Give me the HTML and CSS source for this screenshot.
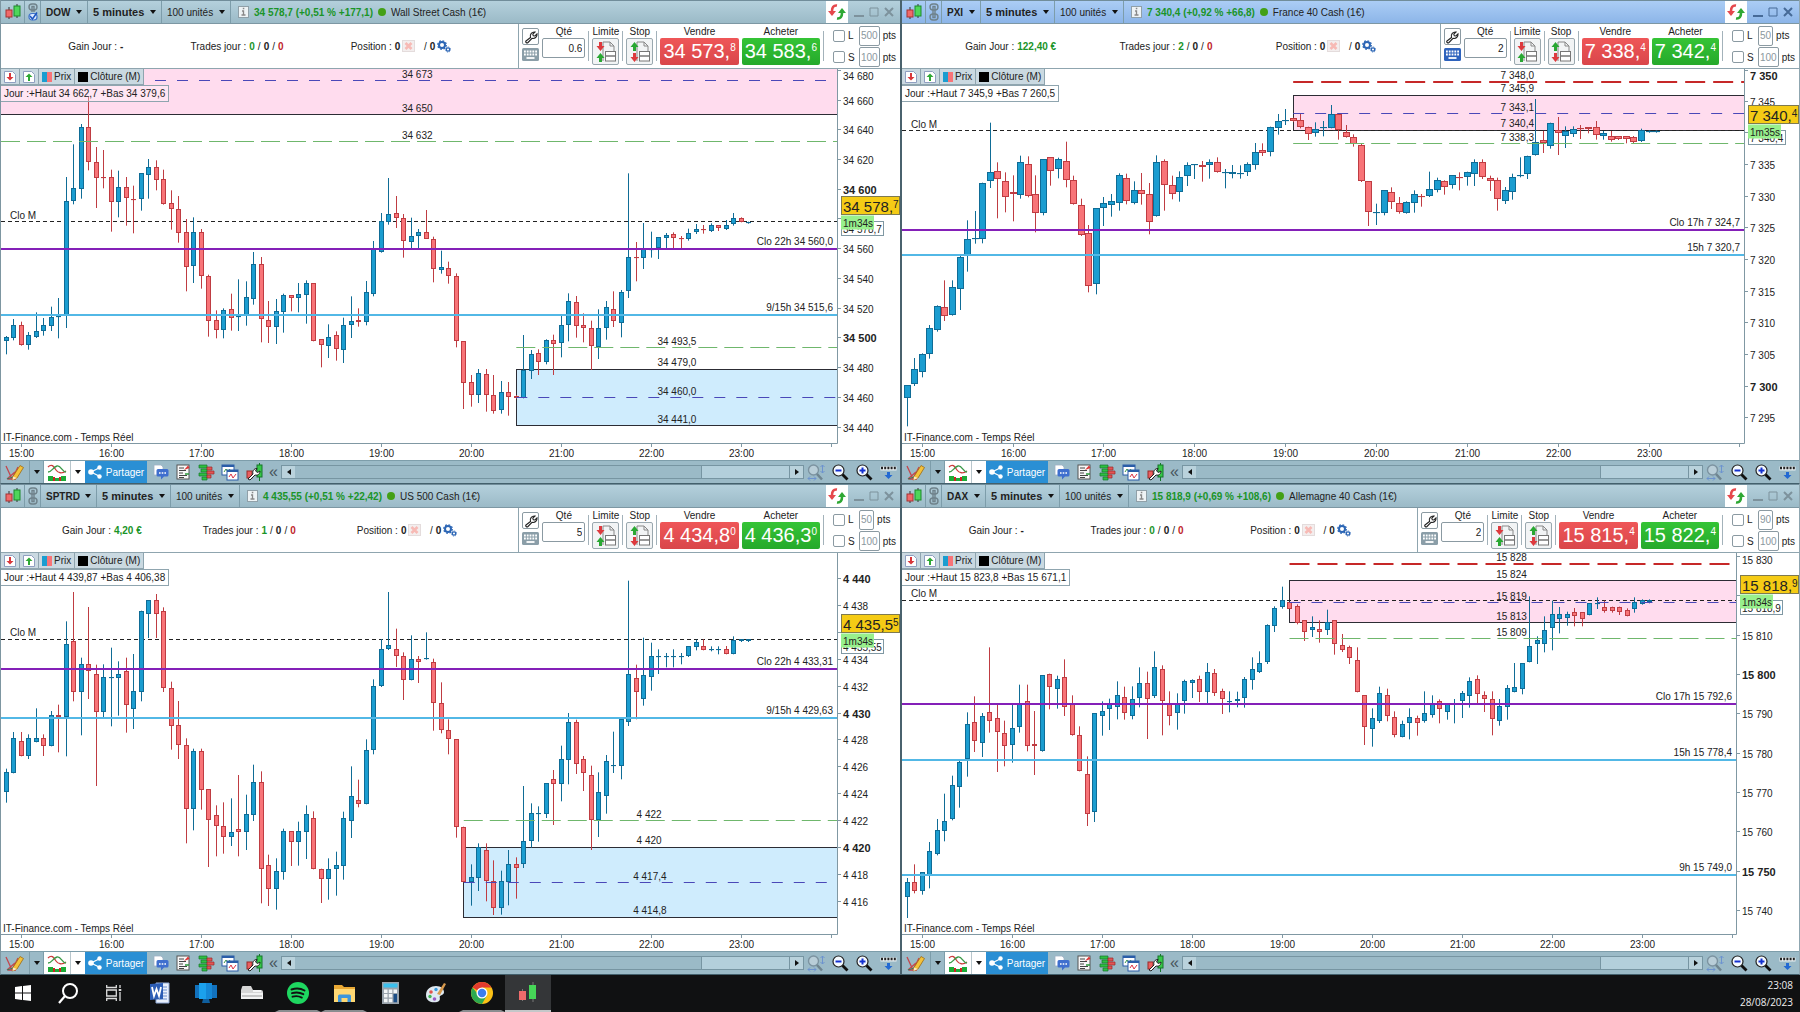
FILE: index.html
```html
<!DOCTYPE html>
<html lang="fr">
<head>
    <meta charset="UTF-8">
    <meta name="viewport" content="width=device-width, initial-scale=1.0">
    <title>Graphiques</title>
    <link rel="stylesheet" href="styles.css">
</head>
<body>
    <svg class="sprite" aria-hidden="true">
        <symbol id="i-candles" viewBox="0 0 16 18">
            <path d="M4 4v12M12 1v14" stroke="#333"/>
            <rect x="1" y="7" width="6" height="7" fill="#f06a6a" stroke="#a83232"/>
            <rect x="9" y="3" width="6" height="10" fill="#4fd65a" stroke="#1d8a2b"/>
        </symbol>
        <symbol id="i-link" viewBox="0 0 10 20">
            <g fill="none" stroke="#6f828b" stroke-width="1.4">
                <rect x="1" y="2" width="8" height="6" rx="3"/><path d="M4 10V4.500h2V10"/>
                <rect x="1" y="12" width="8" height="6" rx="3"/><path d="M4 10v5.500h2V10"/>
            </g>
        </symbol>
        <symbol id="i-linkon" viewBox="0 0 10 20">
            <g fill="none" stroke="#6f828b" stroke-width="1.4">
                <rect x="1" y="2" width="8" height="6" rx="3"/><path d="M4 10V4.500h2V10"/>
            </g>
            <rect x="1" y="11.500" width="8" height="6.500" rx="3" fill="#dce9ff" stroke="#3f73c9" stroke-width="1.200"/>
            <path d="M2 14l2.500 3L9 10.500" fill="none" stroke="#1c55c0" stroke-width="1.500"/>
        </symbol>
        <symbol id="i-info" viewBox="0 0 11 12">
            <rect x=".5" y=".5" width="10" height="11" fill="#eef3f5" stroke="#90a0a8"/>
            <path d="M4 5h1.500v4M3.500 9h4M4.800 2.500h1.500" fill="none" stroke="#888" stroke-width="1.300"/>
        </symbol>
        <symbol id="i-sync" viewBox="0 0 18 16">
            <path d="M9 1.500C5.500 1 4 3.500 4 7" fill="none" stroke="#e5484c" stroke-width="2.600"/>
            <path d="M0 7h8l-4 5z" fill="#e5484c"/>
            <path d="M9 14.500c3.500.5 5-2 5-5.500" fill="none" stroke="#2ea834" stroke-width="2.600"/>
            <path d="M10 9h8l-4-5z" fill="#2ea834"/>
        </symbol>
        <symbol id="i-close" viewBox="0 0 13 12">
            <rect x=".5" y=".5" width="12" height="11" fill="#f3eeee" stroke="#e4dcdc"/>
            <path d="M3.500 3l6 6M9.500 3l-6 6" stroke="#f7bab5" stroke-width="2.600"/>
        </symbol>
        <symbol id="i-gears" viewBox="0 0 14 13">
            <g fill="none" stroke="#2c66b5">
                <circle cx="5" cy="5" r="3" stroke-width="2"/>
                <circle cx="5" cy="5" r="4.300" stroke-width="1.200" stroke-dasharray="1.700 1.670"/>
                <circle cx="11" cy="9.500" r="1.700" stroke-width="1.300"/>
                <circle cx="11" cy="9.500" r="2.600" stroke-width=".8" stroke-dasharray="1 1.040"/>
            </g>
        </symbol>
        <symbol id="i-wrench" viewBox="0 0 14 14">
            <path d="M2 11l4.500-3.500C5.500 4.500 8 1.500 11 2L8.800 4.200l.5 1.500 1.600.3L13 4c.4 3-2.200 5-5 4.300L4 12.500C2.800 13.500 1 12 2 11z" fill="#fff" stroke="#222" stroke-width="1.100"/>
        </symbol>
        <symbol id="i-keyboard" viewBox="0 0 17 13">
            <rect width="17" height="13" rx="1.500" fill="currentColor"/>
            <path d="M2 3.500h13M2 6.500h13" stroke="#fff" stroke-width="2" stroke-dasharray="1.800 1"/>
            <path d="M4.500 10h8" stroke="#fff" stroke-width="1.800"/>
        </symbol>
        <symbol id="i-order" viewBox="0 0 22 22">
            <path d="M8 1h7l4 4v6M15 1v4h4M8 20V1" fill="none" stroke="#888"/>
            <rect x="10.500" y="10.500" width="10" height="9.500" fill="#fff" stroke="#777"/>
            <path d="M10 15h11" stroke="#777" stroke-width="1.500"/>
        </symbol>
        <symbol id="i-limite" viewBox="0 0 22 22">
            <use href="#i-order"/>
            <path d="M4 1h3v4h2.500l-4 5-4-5H4z" fill="#dd3a3e"/>
            <path d="M4 21h3v-4h2.500l-4-5-4 5H4z" fill="#2aa833"/>
        </symbol>
        <symbol id="i-stop" viewBox="0 0 22 22">
            <use href="#i-order"/>
            <path d="M4 10h3V6h2.500l-4-5-4 5H4z" fill="#2aa833"/>
            <path d="M4 12h3v4h2.500l-4 5-4-5H4z" fill="#dd3a3e"/>
        </symbol>
        <symbol id="i-down" viewBox="0 0 12 12">
            <path d="M.5.5h8l3 3v8H.5z" fill="#fff" stroke="#8f9fc0"/>
            <path d="M5 2h2v4h2.500L6 9.500 2.500 6H5z" fill="#d8363a"/>
        </symbol>
        <symbol id="i-up" viewBox="0 0 12 12">
            <path d="M.5.5h8l3 3v8H.5z" fill="#fff" stroke="#8f9fc0"/>
            <path d="M5 10h2V6h2.500L6 2.500 2.500 6H5z" fill="#2ea834"/>
        </symbol>
        <symbol id="i-pencil" viewBox="0 0 20 17">
            <path d="M1 2l6 13L13 3M3 15h8M2 15L10 8" fill="none" stroke="#c4474d" stroke-width="1.300"/>
            <path d="M2 15l9-3" stroke="#3a7a5a"/>
            <path d="M8 12.500L15 1.500l3.500 2L12 14l-4.500 2z" fill="#f4c23a" stroke="#9a6a14" stroke-width=".8"/>
            <path d="M8 12.500L7.500 16l4.500-2z" fill="#fbe9c8"/>
        </symbol>
        <symbol id="i-wave" viewBox="0 0 20 19">
            <path d="M1 4c4-4 6 0 8 3s6 4 10 1" fill="none" stroke="#cc3e3e" stroke-width="1.300"/>
            <path d="M1 9c4 0 5-5 9-6s5 6 9 6" fill="none" stroke="#3a9a48" stroke-width="1.300"/>
            <path d="M1 13h5v5H1zM8 15h4v3H8zM14 13h5v5h-5z" fill="#1dab36"/>
            <path d="M6 14h2v4H6zM12 14h2v4h-2z" fill="#c22"/>
        </symbol>
        <symbol id="i-share" viewBox="0 0 14 14">
            <path d="M12 2.500L3 7l9 4.500" fill="none" stroke="#fff" stroke-width="1.200"/>
            <g fill="#fff"><circle cx="11.500" cy="2.500" r="2.200"/><circle cx="3" cy="7" r="2.800"/><circle cx="11.500" cy="11.500" r="2.200"/></g>
        </symbol>
        <symbol id="i-chat" viewBox="0 0 16 16">
            <path d="M1 1h7l2 2v8H1z" fill="#fff" stroke="#9fb0c4" stroke-width=".8"/>
            <path d="M5 5h9q1.500 0 1.500 1.500v4.500q0 1.500-1.500 1.500h-3L8 15.500v-3H5q-1.500 0-1.500-1.500V6.500Q3.500 5 5 5z" fill="#3f6fce"/>
            <path d="M6 9h7" stroke="#fff" stroke-width="1.600" stroke-dasharray="1.600 1.100"/>
        </symbol>
        <symbol id="i-note" viewBox="0 0 14 16">
            <rect x="1" y="1" width="12" height="14" fill="#f7f7f7" stroke="#555"/>
            <path d="M3 4h5M3 6.500h7M3 9h4M3 11.500h8M3 13.500h5" stroke="#444"/>
            <path d="M8 6l4-4.500L13.500 4z" fill="#d33"/><path d="M9 10h4" stroke="#2a9a3a" stroke-width="1.500"/>
        </symbol>
        <symbol id="i-book" viewBox="0 0 17 17">
            <path d="M1 1h8v3H1zM3 5h6v3H3zM1 9h8v3H1zM4 13h5v3H4z" fill="#2fbf42" stroke="#15762a" stroke-width=".7"/>
            <path d="M9 3h5v3H9zM9 7h7v3H9zM9 11h4v3H9z" fill="#e25555" stroke="#9a2a2a" stroke-width=".7"/>
        </symbol>
        <symbol id="i-windows" viewBox="0 0 18 17">
            <rect x="1" y="1" width="12" height="10" fill="#fff" stroke="#2a5da8"/><path d="M1 2h12" stroke="#2a5da8" stroke-width="2"/>
            <path d="M3 8l2-3 2 3 2-3" fill="none" stroke="#3a9a48"/>
            <rect x="6" y="6" width="11" height="10" fill="#fff" stroke="#2a5da8"/><path d="M6 7h11" stroke="#2a5da8" stroke-width="2"/>
            <path d="M8 13l2-3 2 4 3-4" fill="none" stroke="#d34"/>
        </symbol>
        <symbol id="i-tune" viewBox="0 0 17 18">
            <rect x="1" y="8" width="5" height="7" fill="#ea6060" stroke="#9a2a2a"/>
            <path d="M13.500 0v18" stroke="#15762a"/><rect x="11" y="2" width="5" height="12" fill="#36c848" stroke="#15762a"/>
            <path d="M2 16l5-5C6 8 8 5.500 11 5.500L9.500 8l2 1.500L14 8c0 3.500-2.500 4.500-5 4L4 17z" fill="#fff" stroke="#222"/>
        </symbol>
        <symbol id="i-fit" viewBox="0 0 18 17">
            <circle cx="6.500" cy="6" r="5" fill="#b9ced8" stroke="#7c93a0" stroke-width="1.400"/>
            <path d="M10 10l5 5.500" stroke="#6f8590" stroke-width="2.600"/>
            <path d="M15.500 1v8M13.500 3l2-2 2 2M13.500 7l2 2 2-2M1 14.500h8M3 12.500l-2 2 2 2M7 12.500l2 2-2 2" fill="none" stroke="#6d93cf"/>
        </symbol>
        <symbol id="i-minus" viewBox="0 0 17 17">
            <path d="M10 10l5.500 5.500" stroke="#111" stroke-width="2.800"/>
            <circle cx="6.500" cy="6.500" r="5.500" fill="#f5faff" stroke="#222" stroke-width="1.200"/><path d="M3.500 6.500h6" stroke="#1430d0" stroke-width="2"/>
        </symbol>
        <symbol id="i-plus" viewBox="0 0 17 17">
            <path d="M10 10l5.500 5.500" stroke="#111" stroke-width="2.800"/>
            <circle cx="6.500" cy="6.500" r="5.500" fill="#f5faff" stroke="#222" stroke-width="1.200"/><path d="M3.500 6.500h6M6.500 3.500v6" stroke="#1430d0" stroke-width="2"/>
        </symbol>
        <symbol id="i-dock" viewBox="0 0 17 14">
            <rect x=".5" y="1.500" width="16" height="4" fill="#e9eff2"/>
            <path d="M1 3h15" stroke="#222" stroke-width="2.500" stroke-dasharray="2 1.200"/>
            <path d="M7 7h3v3h2.500l-4 4-4-4H7z" fill="#2369d2"/>
        </symbol>
    </svg>

    <main class="desktop" id="desktop"></main>

    <footer class="taskbar">
        <button class="task" aria-label="Démarrer"><svg viewBox="0 0 16 16" width="16" height="16"><path d="M0 2l7-1v6.500H0zM8 1l8-1v7.500H8zM0 8.500h7V15l-7-1zM8 8.500h8V16l-8-1z" fill="#fff"/></svg></button>
        <button class="task" aria-label="Rechercher"><svg viewBox="0 0 22 22" width="22" height="22"><circle cx="13" cy="9" r="7" fill="none" stroke="#fff" stroke-width="2"/><path d="M8 14l-6 7" stroke="#fff" stroke-width="2.200"/></svg></button>
        <button class="task" aria-label="Vue des tâches"><svg viewBox="0 0 16 16" width="16" height="16"><path d="M.7 0v2.500h9.600V0M.7 16v-2.500h9.600V16M.7 5h9.600v6H.7zM14 0v3M14 7v9" fill="none" stroke="#ddd" stroke-width="1.300"/><path d="M12.700 4h2.600v2h-2.600z" fill="#ddd"/></svg></button>
        <button class="task" aria-label="Word"><svg viewBox="0 0 22 22" width="22" height="22"><path d="M7 1h13v20H7z" fill="#e9f0fb" stroke="#8ea9d6"/><path d="M10 5h8M10 8h8M10 11h8M10 14h8M10 17h8" stroke="#6d8fce"/><path d="M1 2l13-1v16L1 18z" fill="#2c5db5"/><path d="M3 5l2 9 2.500-7 2.500 7 2-9" fill="none" stroke="#fff" stroke-width="1.800"/></svg></button>
        <button class="task" aria-label="Ordinateur"><svg viewBox="0 0 22 20" width="22" height="20"><path d="M0 2h22v13H0z" fill="#1272bd"/><path d="M4 0h13v16H4z" fill="#1ba1ec"/><path d="M11 0h6v16h-6z" fill="#1588d6"/><path d="M8 16h6l1 4H7z" fill="#0f5f9e"/></svg></button>
        <button class="task" aria-label="Scanner"><svg viewBox="0 0 22 16" width="22" height="16"><path d="M1 2q0-1 1-1h8l2 4h8q2 0 2 2v6H0V5z" fill="#d6d6d6"/><path d="M0 8h22v6H0z" fill="#f2f2f2"/><path d="M1 11h20" stroke="#999"/><path d="M12 6h8" stroke="#fff" stroke-width="1.500"/></svg></button>
        <button class="task open" aria-label="Spotify"><svg viewBox="0 0 22 22" width="22" height="22"><circle cx="11" cy="11" r="11" fill="#1ed760"/><path d="M4.500 7.500c4.500-1.500 9.500-1 13 1M5 11.200c4-1.200 8-.8 11.300 1M5.500 14.700c3.500-1 6.500-.6 9.300.9" fill="none" stroke="#111" stroke-width="1.900" stroke-linecap="round"/></svg></button>
        <button class="task open" aria-label="Explorateur"><svg viewBox="0 0 21 18" width="21" height="18"><path d="M0 1h8l2 2h11v15H0z" fill="#e9a935"/><path d="M0 5h21v13H0z" fill="#ffd873"/><path d="M4 18v-6q0-1.500 1.500-1.500h10q1.500 0 1.500 1.500v6h-3.500v-4h-6v4z" fill="#3c96dc"/></svg></button>
        <button class="task" aria-label="Calculatrice"><svg viewBox="0 0 17 22" width="17" height="22"><path d="M0 0h17v22H0z" fill="#9aa4ad"/><path d="M1.500 1.500h14v4h-14z" fill="#3bc0ee"/><path d="M2 7.500h3.500V11H2zM6.800 7.500h3.500V11H6.800zM11.500 7.500H15V11h-3.500zM2 12h3.500v3.500H2zM6.800 12h3.500v3.500H6.800zM2 16.800h3.500v3.500H2zM6.800 16.800h3.500v3.500H6.800z" fill="#f3f6f8"/><path d="M11.500 12H15v8.300h-3.500z" fill="#1c4e86"/></svg></button>
        <button class="task" aria-label="Paint"><svg viewBox="0 0 22 22" width="22" height="22"><path d="M1 13c0-6 5-9 10-9s8 3 8 6-3 3-4 4 1 3-1 5-13 3-13-6z" fill="#dfe9f1"/><path d="M12 12l7-11 2 1-6 11z" fill="#d79a4d"/><circle cx="6" cy="10" r="1.800" fill="#e3524c"/><circle cx="11" cy="7.500" r="1.700" fill="#3c9be0"/><circle cx="5" cy="14.500" r="1.700" fill="#41b556"/><circle cx="9.500" cy="17" r="1.800" fill="#9a5bc4"/></svg></button>
        <button class="task open" aria-label="Chrome"><svg viewBox="0 0 22 22" width="22" height="22"><circle cx="11" cy="11" r="11" fill="#fbc116"/><path d="M11 11L1.500 5.500A11 11 0 0 1 20.500 5.500H11z" fill="#e33b2e"/><path d="M11 11H6L1.500 5.500A11 11 0 0 0 11 22l4.500-8z" fill="#2da94f"/><circle cx="11" cy="11" r="5.500" fill="#fff"/><circle cx="11" cy="11" r="4.200" fill="#3b7ded"/></svg></button>
        <button class="task active" aria-label="Graphiques"><svg viewBox="0 0 20 22" width="20" height="22"><path d="M4.500 7v12M15 0v20" stroke="#777"/><path d="M1 9h7v9H1z" fill="#ee6b6b"/><path d="M11 3h7v14h-7z" fill="#46d657"/></svg></button>
        <div class="clock"><time>23:08</time><time>28/08/2023</time></div>
    </footer>
    <script src="script.js"></script>
</body>
</html>
```

FILE: styles.css
```css
*{
    box-sizing:border-box;
}
body{
    margin:0;
    height:100vh;
    display:flex;
    flex-direction:column;
    overflow:hidden;
    font-family:"Liberation Sans",Arial,sans-serif;
    font-size:10px;
    color:#222;
}
button,input,select{
    font:inherit;
    color:inherit;
    margin:0;
}
button{
    padding:0;
    border:0;
    background:none;
    display:flex;
    align-items:center;
    justify-content:center;
}
.sprite{
    position:absolute;
    width:0;
    height:0;
}
.desktop{
    flex:1;
    min-height:0;
    display:grid;
    grid-template-columns:1fr 1fr;
    grid-template-rows:484fr 491fr;
}
.window{
    min-width:0;
    min-height:0;
    display:flex;
    flex-direction:column;
    border-left:1px solid #7d96a1;
    border-bottom:1px solid #43606c;
    background:#fff;
}
.window:nth-child(even){
    border-left:2px solid #4a626d;
    border-right:1px solid #8fa6b0;
}

/* title bar */
.titlebar{
    height:24px;
    flex:none;
    display:flex;
    align-items:stretch;
    border-top:1px solid #718d9a;
    border-bottom:1px solid #7d97a3;
    background:linear-gradient(#b4d0dc,#9bbac7);
}
.focused .titlebar{
    background:linear-gradient(#abcdf5,#8cb5e8);
}
.cell{
    display:flex;
    align-items:center;
    border-right:1px solid #7d9daa;
}
.logo{
    width:24px;
    justify-content:center;
}
.chain{
    width:16px;
    justify-content:center;
}
.picker{
    padding:0 5px;
    gap:5px;
}
.picker::after,.arrow::after{
    content:"";
    border:3px solid transparent;
    border-top:4px solid #111;
    border-bottom:0;
}
.picker select{
    appearance:none;
    border:0;
    padding:0;
    background:none;
}
.picker .symbol{
    font-weight:bold;
}
.picker .strong{
    font-size:11px;
    font-weight:bold;
}
.quote{
    display:flex;
    flex:1;
    align-items:center;
    gap:5px;
    padding-left:7px;
    white-space:nowrap;
}
.quote b{
    color:#1a9428;
}
.dot{
    width:8px;
    height:8px;
    border-radius:50%;
    background:#43a016;
}
.sync{
    width:22px;
    background:#fff;
}
.controls{
    display:flex;
    align-items:center;
    gap:5px;
    padding:0 6px;
    color:#7d929c;
}
.focused .controls{
    color:#466a97;
}

/* order bar */
.orders{
    height:45px;
    flex:none;
    display:flex;
    border-bottom:1px solid #8fa5af;
}
.stats{
    flex:1;
    display:flex;
    justify-content:space-evenly;
    align-items:center;
    white-space:nowrap;
}
.stats span{
    display:flex;
    align-items:center;
    gap:3px;
}
.stats svg{
    margin-left:-1px;
}
.gain,.win{
    color:#1a9428;
}
.loss{
    color:#c0262c;
}
.ticket{
    display:flex;
    gap:3px;
    padding:1px 4px 0 3px;
    border-left:1px solid #8fa5af;
}
.tools{
    display:flex;
    flex-direction:column;
    gap:3px;
    padding-top:3px;
    color:#8b9ea8;
}
.focused .tools{
    color:#2e63bd;
}
.wrench{
    width:17px;
    height:17px;
    border:1px solid #8b9aa2;
    border-radius:2px;
}
.field{
    display:flex;
    flex-direction:column;
    align-items:center;
}
.field label,.field .caption{
    line-height:13px;
}
.qty{
    width:43px;
    height:20px;
    padding:0 2px;
    text-align:right;
    border:1px solid #8b9aa2;
    border-radius:2px;
}
.sep{
    width:1px;
    height:30px;
    margin-top:6px;
    background:#a3b2ba;
}
.order{
    width:27px;
    height:27px;
    border:1px solid #9aa8af;
    border-radius:2px;
    background:#f2f4f5;
}
.price{
    height:27px;
    padding:0 3px;
    border-radius:2px;
    color:#fff;
    font-size:20px;
    align-items:flex-start;
    line-height:27px;
    white-space:nowrap;
}
.price small{
    font-size:10px;
    line-height:19px;
}
.sell{
    background:linear-gradient(#ef5658,#d9464a);
}
.buy{
    background:linear-gradient(#35c436,#25a92b);
}
.limits{
    display:flex;
    flex-direction:column;
    padding-left:6px;
}
.limits div{
    display:flex;
    align-items:center;
    gap:3px;
    height:22px;
}
.limits label{
    width:8px;
}
.limits input[type=checkbox]{
    appearance:none;
    width:12px;
    height:12px;
    border:1px solid #8b9aa2;
    border-radius:2px;
    background:#fff;
}
.points{
    box-sizing:content-box;
    height:18px;
    padding:0 1px;
    border:1px solid #8b9aa2;
    border-radius:2px;
    color:#8a979e;
}

/* chart */
.chart{
    flex:1;
    min-height:0;
    position:relative;
    overflow:hidden;
}
.plot{
    position:absolute;
    inset:0;
    width:100%;
    height:100%;
}
.legend{
    position:absolute;
    left:0;
    top:0;
    display:flex;
    height:16px;
    background:#cad9e1;
}
.legend>*{
    display:flex;
    align-items:center;
    gap:2px;
    padding:0 3px;
    border-right:1px solid #8fa5af;
    border-bottom:1px solid #8fa5af;
}
.swatch{
    width:10px;
    height:10px;
    background:#000;
}
.swatch.duo{
    background:linear-gradient(90deg,#1b9dd0 50%,#f87478 50%);
}
.range{
    position:absolute;
    left:0;
    top:16px;
    padding:0 3px;
    line-height:15px;
    border:1px solid #8fa5af;
    border-left:0;
    background:rgba(255,255,255,.3);
}
.source{
    position:absolute;
    left:2px;
    bottom:16px;
    line-height:12px;
}
.plot text{
    fill:#222;
    font-size:10px;
}
.plot .round{
    font-size:11px;
    font-weight:bold;
}
.plot .last{
    font-size:15px;
}
.plot .last tspan{
    font-size:10px;
}
.axis{
    stroke:#8098a3;
    fill:none;
}
.up{
    fill:#1b9dd0;
    stroke:#0f6c96;
}
.down{
    fill:#f87478;
    stroke:#bf3c42;
}
.pink{
    fill:#ffdcee;
}
.sky{
    fill:#cfecfd;
}
.edge{
    fill:none;
    stroke:#2c2c34;
}
.mid{
    stroke:#4a48b8;
    stroke-dasharray:11 11;
}
.target{
    stroke:#6fb76c;
    stroke-dasharray:19 7;
}
.alert{
    stroke:#c62828;
    stroke-width:2;
    stroke-dasharray:20 8;
}
.month{
    stroke:#222;
    stroke-dasharray:4 3;
}
.close{
    stroke:#8420b8;
    stroke-width:2;
}
.open15{
    stroke:#52b8e6;
    stroke-width:2;
}
.tag-last{
    fill:#f5cb15;
    stroke:#7e7a50;
}
.tag-time{
    fill:#98f08c;
}
.tag-ref{
    fill:#fff;
    stroke:#8098a3;
}

/* bottom bar */
.bottombar{
    height:23px;
    flex:none;
    display:flex;
    align-items:center;
    background:#9bbac7;
    border-top:1px solid #7d9daa;
}
.bottombar>*{
    height:100%;
}
.tool{
    width:22px;
}
.draw{
    width:29px;
    border-right:1px solid #7d9daa;
}
.arrow{
    width:14px;
}
.white{
    background:#fff;
}
.wave{
    width:27px;
    border-right:1px solid #b8c6cc;
}
.draw+.arrow{
    border-right:1px solid #7d9daa;
}
.share{
    width:62px;
    margin-right:3px;
    gap:4px;
    color:#fff;
    background:#2a8fd4;
}
.fold{
    width:15px;
    font-size:16px;
    line-height:18px;
    color:#47555c;
}
.bottombar .scroll{
    flex:1;
    display:flex;
    height:14px;
    border:1px solid #7795a2;
}
.scroll button{
    width:13px;
    background:#b9d2dc;
}
.scroll button::after{
    content:"";
    border:3px solid transparent;
    border-right:4px solid #111;
    border-left:0;
}
.scroll button:last-child::after{
    border-left:4px solid #111;
    border-right:0;
}
.track{
    flex:1;
    display:flex;
    justify-content:flex-end;
}
.thumb{
    width:18%;
    background:#b3cfdb;
    border:1px solid #7795a2;
    border-width:0 1px;
}
.zoom{
    width:24px;
}

/* taskbar */
.taskbar{
    height:37px;
    flex:none;
    display:flex;
    background:#101112;
}
.task{
    width:46px;
    height:37px;
    border-bottom:2px solid transparent;
}
.task:first-child{
    width:45px;
}
.task.open{
    border-bottom-color:#8a8d90;
    border-left:4px solid #101112;
    border-right:4px solid #101112;
}
.task.active{
    background:#343638;
    border-bottom-color:#c4c7c9;
}
.clock{
    margin-left:auto;
    padding:2px 7px 0 0;
    display:flex;
    flex-direction:column;
    text-align:right;
    color:#eee;
    font-family:"Open Sans",sans-serif;
    line-height:17px;
}
```

FILE: script.js
```js
// Candles: direction, then high / body top / body bottom / low in plot units (3 per pixel)
var charts=[
{
    id:"dow",symbol:"DOW",quote:"34 578,7 (+0,51 % +177,1)",name:"Wall Street Cash (1€)",chain:"i-linkon",
    gain:"-",trades:"0",qty:"0.6",sell:["34 573,","8"],buy:["34 583,","6"],limit:"500",stop:"100",
    range:"Jour :+Haut 34 662,7 +Bas 34 379,6",
    gutter:63,slots:111.4,height:374,offset:3,body:4,
    ref:34560,refY:536,scale:4.46,ticks:[34440,34680,20],bold:100,hidden:34580,
    last:["34 578,","7"],timer:"1m34s",refText:"34 578,7",month:34578.2,
    zones:[{top:34700,bottom:34650,from:-2,cls:"pink"},{top:34479,bottom:34441,from:68,cls:"sky"}],
    levels:[
        {p:34673,t:"34 673",from:-2,at:54.8,cls:"mid"},{p:34650,t:"34 650",at:54.8},{p:34632,t:"34 632",from:-2,at:54.8,cls:"target"},
        {p:34493.5,t:"34 493,5",from:68,at:89.4,cls:"target"},{p:34479,t:"34 479,0",at:89.4},
        {p:34460,t:"34 460,0",from:68,at:89.4,cls:"mid"},{p:34441,t:"34 441,0",at:89.4},
        {p:34560,t:"Clo 22h 34 560,0",from:-2,cls:"close"},{p:34515.6,t:"9/15h 34 515,6",from:-2,cls:"open15"}
    ],
    candles:"u 798 803 814 853,u 747 765 804 811,d 755 766 825 827,u 786 797 827 839,u 727 783 803 804,u 744 766 785 797,u 710 741 770 783,u 684 738 742 805,u 321 393 738 774,u 223 356 395 403,u 162 172 357 386,d 80 172 276 301,d 231 277 324 414,d 240 322 325 355,d 299 322 398 485,u 302 351 398 442,d 321 352 386 467,d 347 387 391 490,u 310 311 389 422,u 267 291 315 386,"+
    "d 271 291 332 361,d 299 328 403 404,d 361 401 419 479,d 378 418 489 518,d 447 488 591 664,u 442 486 588 639,d 477 487 620 656,d 614 618 755 800,d 721 750 782 805,u 715 721 781 805,d 671 718 745 782,u 628 738 742 783,u 634 682 736 767,u 546 583 687 704,d 561 584 748 817,d 693 750 771 819,u 687 724 771 822,u 671 676 728 788,d 675 676 684 724,u 639 672 684 727,"+
    "u 631 640 676 761,d 640 640 814 814,d 808 809 827 892,u 763 801 830 864,d 784 797 839 872,u 743 765 842 879,u 679 753 766 804,d 715 752 756 770,u 633 668 757 766,u 513 536 672 679,u 429 455 546 548,u 324 432 456 464,d 378 429 444 474,d 432 444 515 563,u 443 499 518 535,u 477 488 498 535,d 420 488 507 507,d 500 508 599 637,u 542 591 600 611,d 575 595 620 641,"+
    "d 610 618 815 832,d 813 815 940 1017,d 915 938 976 1010,u 897 910 976 999,d 897 913 976 1025,d 915 976 1025 1031,u 933 966 1021 1031,d 936 967 982 1037,d 975 978 984 986,u 795 901 984 985,u 840 853 903 927,d 838 850 878 915,u 808 810 876 883,d 794 811 824 915,u 737 766 819 862,u 670 694 766 814,d 678 696 768 803,d 730 766 776 817,d 752 775 830 900,u 718 775 833 867,"+
    "u 693 713 776 809,d 664 718 755 771,u 660 666 760 802,u 310 562 664 684,d 516 562 565 634,u 459 538 566 597,u 485 538 541 563,u 501 502 534 567,u 489 496 506 534,d 487 493 504 536,d 498 505 508 534,u 476 489 509 512,u 462 477 488 492,d 465 478 481 491,u 460 466 485 486,d 465 466 476 483,u 450 466 479 480,u 429 444 464 467,d 442 444 456 457,u 455 456 461 461"
},
{
    id:"pxi",symbol:"PXI",quote:"7 340,4 (+0,92 % +66,8)",name:"France 40 Cash (1€)",chain:"i-link",focused:true,
    gain:"122,40 €",trades:"2",qty:"2",sell:["7 338,","4"],buy:["7 342,","4"],limit:"50",stop:"100",
    range:"Jour :+Haut 7 345,9 +Bas 7 260,5",
    gutter:55,slots:111.2,height:374,offset:3,body:6,
    ref:7324.7,refY:479,scale:19,ticks:[7295,7350,5],bold:50,hidden:7340,
    last:["7 340,","4"],timer:"1m35s",refText:"7 340,4",month:7340.35,
    zones:[{top:7345.9,bottom:7340.4,from:51,cls:"pink"}],
    levels:[
        {p:7348,t:"7 348,0",from:51,at:80.6,cls:"alert"},{p:7345.9,t:"7 345,9",at:80.6},{p:7343.1,t:"7 343,1",from:51,at:80.6,cls:"mid"},
        {p:7340.4,t:"7 340,4",at:80.6},{p:7338.3,t:"7 338,3",from:51,at:80.6,cls:"target"},
        {p:7324.7,t:"Clo 17h 7 324,7",from:-2,cls:"close"},{p:7320.7,t:"15h 7 320,7",from:-2,cls:"open15"}
    ],
    candles:"u 946 947 985 1069,u 864 899 943 948,u 850 852 906 922,u 765 775 853 866,u 706 708 782 785,d 631 713 738 753,u 631 652 735 737,u 557 561 658 720,u 451 508 556 605,u 423 505 507 521,u 338 340 509 520,u 158 308 335 354,d 277 305 329 445,d 307 334 383 427,d 316 367 374 454,u 257 277 377 386,d 259 283 380 382,d 316 373 431 487,u 267 268 431 436,d 262 262 304 347,"+
    "u 263 268 299 325,d 215 274 331 352,d 317 331 403 404,d 386 406 497 498,d 465 490 650 667,u 414 415 644 673,u 381 401 416 468,u 372 393 407 440,u 310 316 399 422,d 311 325 395 403,u 334 361 401 403,d 309 361 374 404,d 339 373 458 493,u 256 277 439 440,d 268 274 346 422,d 317 345 374 388,u 304 321 368 395,u 277 286 318 348,u 282 283 285 327,d 273 286 292 335,"+
    "u 268 277 287 326,d 262 277 307 308,u 297 306 308 355,u 285 306 312 325,u 286 310 312 326,u 277 282 307 318,u 219 247 287 299,d 220 240 251 258,u 170 171 248 259,u 132 153 174 194,u 117 150 154 165,d 143 145 155 156,d 132 151 173 175,d 170 173 194 210,u 157 178 189 200,u 153 171 174 199,u 105 132 174 175,d 132 134 182 209,d 165 186 202 203,d 193 202 222 230,"+
    "d 222 226 335 336,d 333 334 427 468,u 401 427 430 465,u 360 361 430 436,d 352 367 398 417,d 381 400 428 431,u 394 398 430 431,u 361 373 401 428,d 372 378 382 410,u 305 359 380 381,u 323 331 362 367,d 331 333 352 374,u 315 317 347 356,d 307 322 326 361,u 305 306 323 347,u 268 277 313 348,d 268 277 323 327,d 317 325 335 363,d 323 331 389 422,u 351 361 394 402,"+
    "u 311 322 368 389,u 262 315 318 322,u 257 258 312 327,u 87 217 256 257,d 183 210 221 249,u 158 159 230 236,d 141 182 191 255,u 169 184 200 234,u 169 177 194 201,d 165 175 178 207,d 171 171 178 190,d 153 171 196 209,u 183 191 200 209,d 183 198 211 215,d 198 199 208 210,d 198 199 209 220,d 198 201 217 220,u 176 181 215 216,u 181 183 188 188,u 181 183 188 188"
},
{
    id:"sptrd",symbol:"SPTRD",quote:"4 435,55 (+0,51 % +22,42)",name:"US 500 Cash (1€)",chain:"i-link",
    gain:"4,20 €",trades:"1",qty:"5",sell:["4 434,8","0"],buy:["4 436,3","0"],limit:"50",stop:"100",
    range:"Jour :+Haut 4 439,87 +Bas 4 406,38",
    gutter:63,slots:111.4,height:381,offset:7,body:4,
    ref:4433.31,refY:340,scale:40.3,ticks:[4416,4440,2],bold:10,hidden:4436,
    last:["4 435,5","5"],timer:"1m34s",refText:"4 435,55",month:4435.5,
    zones:[{top:4420,bottom:4414.8,from:61,cls:"sky"}],
    levels:[
        {p:4422,t:"4 422",from:61,at:85.7,cls:"target"},{p:4420,t:"4 420",at:85.7},{p:4417.4,t:"4 417,4",from:61,at:85.8,cls:"mid"},
        {p:4414.8,t:"4 414,8",at:85.8},
        {p:4433.31,t:"Clo 22h 4 433,31",from:-2,cls:"close"},{p:4429.63,t:"9/15h 4 429,63",from:-2,cls:"open15"}
    ],
    candles:"u 640 652 712 742,u 530 550 653 654,d 530 558 602 603,u 537 550 602 611,u 459 550 560 561,d 537 550 572 602,u 467 480 572 573,d 448 480 486 591,u 198 268 486 603,d 110 258 410 438,u 307 327 411 540,d 155 328 348 431,d 328 358 470 692,u 327 367 470 486,u 277 367 369 513,u 318 358 368 481,d 307 348 450 532,u 296 409 461 521,u 166 167 411 438,u 135 136 178 248,"+
    "d 116 136 178 248,d 156 167 400 410,d 379 398 512 583,d 437 511 571 611,d 549 569 762 864,u 580 589 762 825,d 580 589 704 763,d 701 703 794 935,d 750 781 813 903,d 741 812 845 895,u 729 832 845 872,d 659 823 832 903,u 718 778 832 884,u 628 680 779 797,d 648 680 942 1044,d 898 930 1001 1052,u 909 949 1001 1063,u 820 829 950 973,d 828 829 860 932,u 799 828 860 931,"+
    "u 750 778 830 911,d 768 790 941 942,d 940 941 973 1043,u 909 941 973 1033,u 889 930 941 1021,u 769 790 932 973,u 633 724 797 848,d 673 736 746 756,u 552 584 746 747,u 372 393 584 597,u 251 283 394 395,u 110 271 283 284,d 220 283 304 335,d 291 303 374 434,u 240 311 374 375,d 302 311 322 383,u 231 310 312 313,d 310 322 443 526,d 381 443 526 534,d 492 524 553 597,"+
    "d 553 553 815 847,d 814 815 980 981,u 927 967 980 1051,u 864 877 968 1007,d 864 885 978 1038,d 915 978 1058 1079,u 946 977 1058 1078,u 884 927 980 1050,d 906 927 938 1030,u 692 857 928 938,u 744 775 858 877,u 753 774 777 859,u 683 685 777 788,d 644 673 686 809,u 571 613 686 738,u 473 501 615 687,d 493 501 626 656,d 602 613 655 707,d 631 661 794 884,u 651 711 795 845,"+
    "u 599 619 722 775,u 529 631 634 653,u 491 493 634 672,u 76 358 501 512,d 328 370 410 492,u 247 359 431 451,u 262 303 365 406,u 282 302 304 356,u 293 302 304 336,u 282 302 304 336,u 293 302 304 327,u 272 273 304 305,u 253 262 275 285,d 252 273 284 285,u 273 282 284 288,u 273 282 284 297,d 272 283 296 297,u 243 254 296 297,u 251 252 258 260,u 251 252 258 260"
},
{
    id:"dax",symbol:"DAX",quote:"15 818,9 (+0,69 % +108,6)",name:"Allemagne 40 Cash (1€)",chain:"i-link",
    gain:"-",trades:"0",qty:"2",sell:["15 815,","4"],buy:["15 822,","4"],limit:"90",stop:"100",
    range:"Jour :+Haut 15 823,8 +Bas 15 671,1",
    gutter:63,slots:111.2,height:381,offset:7,body:4,
    ref:15792.6,refY:445,scale:11.8,ticks:[15740,15830,10],bold:50,hidden:15820,
    last:["15 818,","9"],timer:"1m34s",refText:"15 818,9",month:15818.9,
    zones:[{top:15823.8,bottom:15813.2,from:51,cls:"pink"}],
    levels:[
        {p:15828,t:"15 828",from:51,at:80.6,cls:"alert"},{p:15823.8,t:"15 824",at:80.6},{p:15818.4,t:"15 819",from:51,at:80.6,cls:"mid"},
        {p:15813.2,t:"15 813",at:80.6},{p:15809.2,t:"15 809",from:51,at:80.6,cls:"target"},
        {p:15792.6,t:"Clo 17h 15 792,6",from:-2,cls:"close"},{p:15778.4,t:"15h 15 778,4",from:-2,cls:"open15"},{p:15749,t:"9h 15 749,0",from:-2,cls:"open15"}
    ],
    candles:"u 968 980 1025 1088,d 927 980 1007 1014,u 951 952 1007 1018,u 860 887 959 999,u 791 826 896 900,u 715 798 827 858,u 661 691 793 795,u 616 621 697 757,u 471 508 613 664,d 423 502 557 590,u 473 483 563 605,d 276 471 497 532,d 446 490 532 650,d 496 535 574 633,u 448 519 570 622,u 388 446 515 532,d 388 437 573 588,d 467 567 573 659,u 360 361 587 589,d 355 356 397 462,"+
    "u 361 373 402 460,d 312 367 455 482,d 420 448 539 541,d 513 539 647 648,d 603 657 776 812,u 473 475 770 800,u 438 468 482 541,u 430 447 461 524,u 378 420 455 492,d 394 427 475 493,u 393 432 482 492,u 336 384 428 456,d 349 384 433 551,u 288 336 422 428,d 330 342 438 540,d 408 447 482 510,u 414 445 475 523,u 373 378 438 475,u 372 374 385 428,d 361 373 410 440,"+
    "u 323 350 410 445,d 341 355 415 422,d 400 408 433 476,u 408 437 440 471,u 409 433 438 456,u 365 373 428 457,u 306 342 374 403,u 288 325 352 353,u 207 211 320 326,u 153 158 213 230,u 94 136 155 160,d 141 142 161 161,d 147 153 203 207,d 196 196 231 257,u 183 217 224 245,d 195 223 230 262,u 163 202 226 239,d 196 196 267 298,d 236 271 285 290,d 271 277 310 326,"+
    "d 276 314 410 411,d 420 421 515 569,u 459 490 523 574,u 394 415 498 503,d 400 421 482 498,d 468 485 540 546,u 496 508 545 546,u 459 485 503 552,d 481 490 503 541,u 408 474 497 502,u 420 447 481 487,d 432 437 461 504,u 447 448 470 493,u 431 445 447 504,u 407 415 438 488,u 366 378 422 457,d 360 373 416 445,d 408 420 433 470,d 408 432 493 540,u 431 454 497 511,"+
    "u 389 400 455 493,u 323 396 410 411,u 324 325 402 417,u 123 272 320 321,u 243 255 267 326,u 183 224 266 291,u 136 178 219 285,u 155 176 191 234,u 169 178 188 211,d 158 171 182 213,d 170 172 191 213,u 143 145 179 180,u 126 145 148 161,d 136 156 167 172,d 154 156 167 172,d 154 156 172 179,d 159 166 182 183,u 126 140 162 172,u 132 136 147 148,u 132 135 142 144"
}
];

var icon=(name,w,h)=>`<svg width="${w}" height="${h}" aria-hidden="true"><use href="#${name}"/></svg>`;
var half=(v)=>Math.round(v-0.5)+0.5;
var format=(n)=>String(n).replace(/(\d{3})$/," $1");

var windowHtml=(c)=>`
<section class="window ${c.focused?"focused":""}">
    <header class="titlebar">
        <span class="cell logo">${icon("i-candles",16,18)}</span>
        <span class="cell chain">${icon(c.chain,10,20)}</span>
        <span class="cell picker"><select class="symbol" aria-label="Valeur"><option>${c.symbol}</option></select></span>
        <span class="cell picker"><select class="strong" aria-label="Unité de temps"><option>5 minutes</option></select></span>
        <span class="cell picker"><select aria-label="Historique"><option>100 unités</option></select></span>
        <div class="quote">${icon("i-info",11,12)}<b>${c.quote}</b><i class="dot"></i><span>${c.name}</span></div>
        <button class="sync" aria-label="Synchroniser">${icon("i-sync",18,16)}</button>
        <div class="controls">
            <button aria-label="Réduire"><svg width="10" height="12"><path d="M0 10h10" stroke="currentColor" stroke-width="2"/></svg></button>
            <button aria-label="Agrandir"><svg width="10" height="12"><path d="M1 2h8v8H1z" fill="none" stroke="currentColor"/></svg></button>
            <button aria-label="Fermer"><svg width="10" height="12"><path d="M1 2l8 8M9 2l-8 8" stroke="currentColor" stroke-width="2"/></svg></button>
        </div>
    </header>
    <div class="orders">
        <div class="stats">
            <span>Gain Jour : <b class="${c.gain=="-"?"":"gain"}">${c.gain}</b></span>
            <span>Trades jour : <b class="win">${c.trades}</b>/<b>0</b>/<b class="loss">0</b></span>
            <span>Position : <b>0</b> ${icon("i-close",13,12)} &nbsp; / <b>0</b>${icon("i-gears",14,13)}</span>
        </div>
        <div class="ticket">
            <div class="tools">
                <button class="wrench" aria-label="Options">${icon("i-wrench",14,14)}</button>
                <button aria-label="Clavier">${icon("i-keyboard",17,13)}</button>
            </div>
            <div class="field"><label for="${c.id}-qty">Qté</label><input class="qty" id="${c.id}-qty" type="text" value="${c.qty}"></div>
            <i class="sep"></i>
            <div class="field"><span class="caption">Limite</span><button class="order" aria-label="Limite">${icon("i-limite",22,22)}</button></div>
            <i class="sep"></i>
            <div class="field"><span class="caption">Stop</span><button class="order" aria-label="Stop">${icon("i-stop",22,22)}</button></div>
            <i class="sep"></i>
            <div class="field"><span class="caption">Vendre</span><button class="price sell">${c.sell[0]}<small>${c.sell[1]}</small></button></div>
            <div class="field"><span class="caption">Acheter</span><button class="price buy">${c.buy[0]}<small>${c.buy[1]}</small></button></div>
            <i class="sep"></i>
            <div class="limits">
                <div><input type="checkbox" id="${c.id}-l"><label for="${c.id}-l">L</label><input class="points" type="text" aria-label="Points limite" value="${c.limit}" style="width:${c.limit.length}ch">pts</div>
                <div><input type="checkbox" id="${c.id}-s"><label for="${c.id}-s">S</label><input class="points" type="text" aria-label="Points stop" value="${c.stop}" style="width:${c.stop.length}ch">pts</div>
            </div>
        </div>
    </div>
    <div class="chart">
        <svg class="plot"></svg>
        <div class="legend">
            <button aria-label="Masquer">${icon("i-down",12,12)}</button>
            <button aria-label="Afficher">${icon("i-up",12,12)}</button>
            <span><i class="swatch duo"></i>Prix</span>
            <span><i class="swatch"></i>Clôture (M)</span>
        </div>
        <div class="range">${c.range}</div>
        <div class="source">IT-Finance.com - Temps Réel</div>
    </div>
    <div class="bottombar">
        <button class="draw" aria-label="Dessiner">${icon("i-pencil",20,17)}</button>
        <button class="arrow" aria-label="Outils de dessin"></button>
        <button class="wave white" aria-label="Indicateurs">${icon("i-wave",20,19)}</button>
        <button class="arrow white" aria-label="Liste des indicateurs"></button>
        <button class="share">${icon("i-share",14,14)}Partager</button>
        <button class="tool" aria-label="Chat">${icon("i-chat",16,16)}</button>
        <button class="tool" aria-label="Notes">${icon("i-note",14,16)}</button>
        <button class="zoom" aria-label="Carnet">${icon("i-book",17,17)}</button>
        <button class="zoom" aria-label="Fenêtres">${icon("i-windows",18,17)}</button>
        <button class="zoom" aria-label="Réglages">${icon("i-tune",17,18)}</button>
        <button class="fold" aria-label="Replier">«</button>
        <div class="scroll"><button aria-label="Reculer"></button><div class="track"><div class="thumb"></div></div><button aria-label="Avancer"></button></div>
        <button class="zoom" aria-label="Ajuster">${icon("i-fit",18,17)}</button>
        <button class="zoom" aria-label="Zoom arrière">${icon("i-minus",17,17)}</button>
        <button class="zoom" aria-label="Zoom avant">${icon("i-plus",17,17)}</button>
        <button class="zoom" aria-label="Ancrer">${icon("i-dock",17,14)}</button>
    </div>
</section>`;

var drawChart=(c,svg)=>{
    var box=svg.getBoundingClientRect();
    var w=Math.round(box.width)-c.gutter;
    var h=Math.round(box.height)-17;
    var step=w/c.slots;
    var x=(i)=>5+i*step;
    var y=(u)=>(u+c.offset)/3*h/c.height;
    var py=(p)=>y(c.refY+(c.ref-p)*c.scale);
    var out="";
    var line=(cls,x1,y1,x2,y2)=>`<path class="${cls}" d="M${x1} ${y1}L${x2} ${y2}"/>`;

    out+=`<clipPath id="clip-${c.id}"><rect width="${w}" height="${h}"/></clipPath><g clip-path="url(#clip-${c.id})">`;
    c.zones.forEach(z=>{
        var left=z.from<0?-5:half(x(z.from)),top=half(py(z.top)),bottom=half(py(z.bottom));
        var d=`x="${left}" y="${top}" width="${w+10-left}" height="${bottom-top}"`;
        out+=`<rect class="${z.cls}" ${d}/><rect class="edge" ${d}/>`;
    });
    out+=line("month",0,half(py(c.month)),w,half(py(c.month)));
    c.candles.split(",").forEach((s,i)=>{
        var v=s.split(" ");
        var cls=v[0]=="u"?"up":"down";
        var cx=half(x(i));
        var top=half(y(+v[2])),bottom=half(y(+v[3]));
        out+=line(cls,cx,y(+v[1]),cx,y(+v[4]));
        out+=`<rect class="${cls}" x="${cx-c.body/2}" y="${top}" width="${c.body}" height="${Math.max(bottom-top-1,0.1)}"/>`;
    });
    c.levels.forEach(l=>{
        var ly=py(l.p);
        if(l.cls){
            var thick=["close","open15","alert"].includes(l.cls);
            ly=thick?Math.round(ly):half(ly);
            out+=line(l.cls,l.from<0?0:x(l.from),ly,w,ly);
        }
        var base=Math.max(ly-3,8);
        if(l.at){
            out+=`<text x="${x(l.at)}" y="${base}" text-anchor="middle">${l.t}</text>`;
        }else{
            out+=`<text x="${w-4}" y="${base-1}" text-anchor="end">${l.t}</text>`;
        }
    });
    out+=`<text x="9" y="${py(c.month)-3}">Clo M</text></g>`;

    // axes
    out+=`<path class="axis" d="M${w+0.5} 0V${h+0.5}M0 ${h+0.5}H${w+0.5}"/>`;
    for(var p=c.ticks[0];p<=c.ticks[1];p+=c.ticks[2]){
        var ty=Math.max(half(py(p)),1.5);
        out+=line("axis",w,ty,w+4,ty);
        if(p!=c.hidden){
            out+=`<text class="${p%c.bold==0?"round":""}" x="${w+6}" y="${Math.max(ty+4,11)}">${format(p)}</text>`;
        }
    }
    for(var t=15;t<=24;t++){
        var tx=half(x(2+(t-15)*12));
        out+=line("axis",tx,h,tx,h+4);
        if(t<24)out+=`<text x="${tx}" y="${h+14}" text-anchor="middle">${t}:00</text>`;
    }

    // price tags
    var my=half(py(c.month));
    out+=`<rect class="tag-ref" x="${w+4.5}" y="${my}" width="${c.refText.length*5+2}" height="14"/>`;
    out+=`<text x="${w+6}" y="${my+11}">${c.refText}</text>`;
    out+=`<rect class="tag-time" x="${w+4}" y="${my-6}" width="33" height="14"/>`;
    out+=`<text x="${w+6}" y="${my+5}">${c.timer}</text>`;
    out+=`<rect class="tag-last" x="${w+4.5}" y="${my-25}" width="${c.gutter-5}" height="18"/>`;
    out+=`<text class="last" x="${w+6}" y="${my-10}">${c.last[0]}<tspan dy="-4">${c.last[1]}</tspan></text>`;
    svg.innerHTML=out;
}

var desktop=document.querySelector("#desktop");
desktop.innerHTML=charts.map(windowHtml).join("");
var drawAll=()=>{
    desktop.querySelectorAll(".plot").forEach((svg,i)=>drawChart(charts[i],svg));
}
drawAll();
window.addEventListener("resize",drawAll);
```
